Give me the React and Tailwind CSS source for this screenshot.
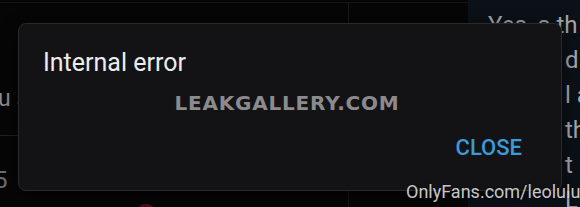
export default function App() {
  const rightLines = ["d", "l a", "th", "t", "L"];
  return (
    <div className="relative w-[580px] h-[207px] overflow-hidden bg-[#060607] font-['Roboto',sans-serif]">
      <div className="flex h-full">
        {/* left column */}
        <div className="relative w-[468px] h-full flex flex-col">
          <div className="h-[3px] bg-[#050505] border-b border-[#151517]"></div>
          <div className="flex flex-1">
            <div className="w-[348px] flex flex-col">
              <div className="h-[84px]"></div>
              <div className="text-[23px] leading-none text-[#8a8a8c] -ml-[2px] whitespace-nowrap">u s</div>
              <div className="mt-[25px] h-px w-[20px] bg-[#222224]"></div>
              <div className="mt-[32px] text-[24px] leading-none text-[#6e6e70] -ml-[6px]">5</div>
            </div>
            <div className="w-px bg-[#18181a]"></div>
            <div className="flex-1"></div>
          </div>
        </div>
        {/* right column */}
        <div className="flex-1 h-full bg-[#0c1117] flex flex-col pt-[8px] text-[24px] leading-[35px] text-[#a3a7ab] whitespace-nowrap overflow-hidden">
          <div className="pl-[20px]">Yes, a th</div>
          {rightLines.map((t, i) => (
            <div key={i} className="pl-[97px]">{t}</div>
          ))}
        </div>
      </div>

      {/* red blob bottom */}
      <div className="absolute left-[137px] top-[204px] w-[18px] h-[8px] rounded-t-full bg-[#4e0c1c]"></div>

      {/* dialog */}
      <div className="absolute left-[18px] top-[23px] w-[544px] h-[168px] rounded-[8px] border border-[#2a2a2d] bg-[#131316] flex flex-col shadow-[0_4px_16px_rgba(0,0,0,0.6)]">
        <div className="pl-[24px] pt-[26px] text-[25px] leading-none text-[#ececec]">Internal error</div>
        <div className="mt-[18px] flex justify-center pr-[6px]">
          <span className="font-['DejaVu_Sans',sans-serif] font-bold text-[20px] leading-none text-[#8b8b8d] tracking-[0.8px]">LEAKGALLERY.COM</span>
        </div>
        <div className="mt-[24px] flex justify-end pr-[39px]">
          <span className="text-[22px] leading-none font-medium text-[#3a9bd8]">CLOSE</span>
        </div>
      </div>

      {/* watermark */}
      <div className="absolute left-[406px] top-[180px] text-[18px] leading-[24px] text-[rgba(235,235,235,0.85)] whitespace-nowrap [text-shadow:0_0_2px_rgba(0,0,0,0.7)]">OnlyFans.com/leolulu</div>
    </div>
  );
}
